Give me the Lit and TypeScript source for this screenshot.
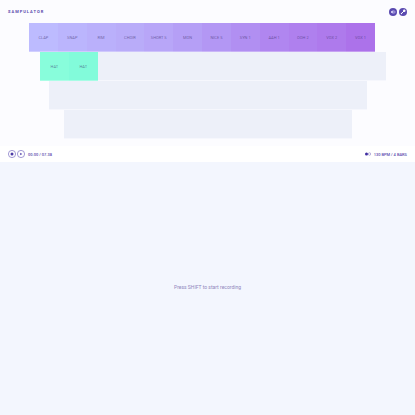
import { LitElement, css, html } from 'lit'
import { customElement, property } from 'lit/decorators.js'

interface Pad {
  label: string
  color: string
}

interface Row {
  name: string
  slots: number
  pads: Pad[]
}

const rows: Row[] = [
  {
    name: 'numbers',
    slots: 12,
    pads: [
      { label: 'CLAP', color: '#bdbbff' },
      { label: 'SNAP', color: '#bbb5fd' },
      { label: 'RIM', color: '#bab0fb' },
      { label: 'CHOIR', color: '#b9acf9' },
      { label: 'SHORT S', color: '#b8a6f8' },
      { label: 'MON', color: '#b59ff6' },
      { label: 'NICE 5', color: '#b397f4' },
      { label: 'SYN 1', color: '#b18ff2' },
      { label: 'AAH 1', color: '#b086f0' },
      { label: 'OOH 2', color: '#af80ee' },
      { label: 'VOX 2', color: '#ae7aec' },
      { label: 'VOX 1', color: '#ac72ea' },
    ],
  },
  {
    name: 'top',
    slots: 12,
    pads: [
      { label: 'HAT', color: '#88fddb' },
      { label: 'HAT', color: '#82fbda' },
    ],
  },
  { name: 'home', slots: 11, pads: [] },
  { name: 'bottom', slots: 10, pads: [] },
]

@customElement('pad-row')
export class PadRow extends LitElement {
  @property({ attribute: false }) row!: Row

  static styles = css`
    :host { display: block; }

    .row {
      display: grid;
      height: 29px;
      background: #edf0f9;
      box-shadow: inset 0 -1px #f6f7fd;
    }

    .pad {
      min-width: 0;
      padding: 0;
      border: 0;
      box-shadow: inset 0 -1px rgba(255, 255, 255, 0.3);
      font: 4px "Roboto", sans-serif;
      color: rgba(60, 45, 110, 0.6);
      white-space: nowrap;
      cursor: pointer;
    }
  `

  render() {
    const { slots, pads } = this.row
    return html`
      <div class="row" style="grid-template-columns: repeat(${slots}, 1fr)">
        ${pads.map(pad => html`
          <button type="button" class="pad" style="background: ${pad.color}">${pad.label}</button>
        `)}
      </div>
    `
  }
}

@customElement('app-root')
export class AppRoot extends LitElement {
  static styles = css`
    :host {
      display: flex;
      flex-direction: column;
      min-height: 100vh;
      background: #f3f6fe;
      color: #5a4aad;
      font-family: "Roboto", sans-serif;
    }

    button { padding: 0; cursor: pointer; }

    .board { background: #fcfcff; padding-bottom: 7px; }

    header {
      display: flex;
      align-items: center;
      justify-content: space-between;
      height: 23px;
      padding: 0 8px;
    }

    h1 {
      margin: 0;
      font-size: 4px;
      font-weight: 700;
      letter-spacing: 1px;
    }

    .actions { display: flex; gap: 2px; }

    .action {
      width: 8px;
      height: 8px;
      border: 0;
      background: none;
    }

    svg { display: block; width: 100%; height: 100%; }

    .numbers { margin: 0 40px 0 29px; }
    .top { margin: 0 29px 0 40px; }
    .home { margin: 0 48px 0 49px; }
    .bottom { margin: 0 63px 0 64px; }

    .transport {
      display: flex;
      align-items: center;
      justify-content: space-between;
      height: 16px;
      padding: 0 8px;
      background: #fff;
      font-size: 4px;
      font-weight: 500;
    }

    .group { display: flex; align-items: center; gap: 1px; }

    .control {
      width: 8px;
      height: 8px;
      border: 0;
      background: none;
    }

    .time { margin-left: 2px; }
    .toggle { width: 6px; height: 4px; border: 0; background: none; }
    .tempo { margin-left: 2px; }

    .recorder {
      flex: 1;
      display: flex;
      align-items: center;
      justify-content: center;
      padding-bottom: 4px;
    }

    .hint { margin: 0; font-size: 5px; color: #9088bd; }
  `

  render() {
    return html`
      <section class="board">
        <header>
          <h1>SAMPULATOR</h1>
          <div class="actions">
            <button type="button" class="action" aria-label="Keyboard sounds">
              <svg viewBox="0 0 16 16">
                <circle cx="8" cy="8" r="8" fill="#5a4ab0"/>
                <path d="M4 6h2l3-2v8l-3-2H4z" fill="#c8c2ef"/>
                <path d="M11 5v6M12.5 6.5v3" fill="none" stroke="#c8c2ef"/>
              </svg>
            </button>
            <button type="button" class="action" aria-label="Share">
              <svg viewBox="0 0 16 16">
                <circle cx="8" cy="8" r="8" fill="#5a4ab0"/>
                <path d="M5 11l5-5" stroke="#fff" stroke-width="2"/>
                <circle cx="10.5" cy="5.5" r="2.5" fill="#fff"/>
                <circle cx="5" cy="11" r="1.4" fill="#fff"/>
              </svg>
            </button>
          </div>
        </header>
        ${rows.map(row => html`<pad-row class="${row.name}" .row=${row}></pad-row>`)}
      </section>
      <section class="transport">
        <div class="group">
          <button type="button" class="control" aria-label="Record">
            <svg viewBox="0 0 16 16">
              <circle cx="8" cy="8" r="7.2" fill="#fff" stroke="#8478c6" stroke-width="1.5"/>
              <circle cx="8" cy="8" r="3" fill="#4c3ba5"/>
            </svg>
          </button>
          <button type="button" class="control" aria-label="Play">
            <svg viewBox="0 0 16 16">
              <circle cx="8" cy="8" r="7.2" fill="#fff" stroke="#8478c6" stroke-width="1.5"/>
              <path d="M6.5 5.5l4 2.5-4 2.5z" fill="#4c3ba5"/>
            </svg>
          </button>
          <span class="time">00.00 / 07.38</span>
        </div>
        <div class="group">
          <button type="button" class="toggle" aria-label="Metronome">
            <svg viewBox="0 0 12 8">
              <circle cx="3" cy="4" r="3" fill="#3f2da0"/>
              <circle cx="9" cy="4" r="2.5" fill="none" stroke="#7769bd"/>
            </svg>
          </button>
          <span class="tempo">130 BPM / 4 BARS</span>
        </div>
      </section>
      <main class="recorder">
        <p class="hint">Press SHIFT to start recording</p>
      </main>
    `
  }
}
